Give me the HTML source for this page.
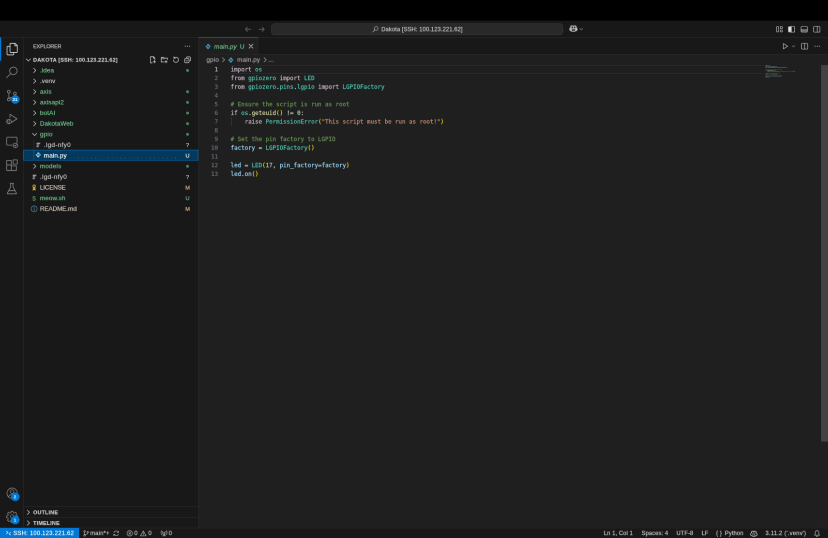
<!DOCTYPE html>
<html lang="en">
<head>
<meta charset="utf-8">
<title>main.py - Dakota [SSH: 100.123.221.62]</title>
<style>
html,body{margin:0;padding:0;background:#000;}
body{width:828px;height:538px;overflow:hidden;position:relative;}
#wrap{position:absolute;left:0;top:0;width:1711px;height:1112px;transform:scale(0.484);transform-origin:0 0;will-change:transform;}
#root{position:absolute;left:0;top:0;width:1711px;height:1112px;filter:url(#soft);
  font-family:"Liberation Sans",sans-serif;font-size:13px;color:#cccccc;background:#000;overflow:hidden;}
#root *{box-sizing:border-box;}
.abs{position:absolute;}
svg{display:block;overflow:visible;}
.ui{-webkit-text-stroke:0.250px;}
/* title bar */
#titlebar{left:0;top:42.5px;width:1711px;height:35px;background:#181818;border-bottom:1px solid #2b2b2b;}
#cc{left:560.300px;top:6px;width:603px;height:24px;background:#292929;border:1px solid #3c3c3c;border-radius:6px;}
#cctext{left:0;top:0;width:100%;height:22px;line-height:22px;text-align:center;font-size:12px;letter-spacing:0.190px;color:#cccccc;white-space:nowrap;}
/* activity bar */
#activity{left:0;top:77.5px;width:48px;height:1013.5px;background:#181818;border-right:1px solid #2b2b2b;}
.act{position:absolute;left:0;width:48px;height:48px;}
.act svg{position:absolute;left:9px;top:9px;width:30px;height:30px;}
.badge{position:absolute;left:21.500px;top:23px;min-width:18px;height:18px;border-radius:9px;background:#0078d4;color:#fff;font-size:9.500px;font-weight:bold;line-height:18px;text-align:center;padding:0 3px;}
/* sidebar */
#sidebar{left:48px;top:77.5px;width:362px;height:1013.5px;background:#181818;border-right:1px solid #2b2b2b;}
.row{position:absolute;left:0;width:361px;height:22px;line-height:22px;white-space:nowrap;}
.row .lbl{position:absolute;top:0.700px;letter-spacing:0.170px;}
.row .st{position:absolute;left:329px;top:0;width:20px;text-align:center;font-size:11.5px;}
.g{color:#73c991;}
.m{color:#d6cdbc;}
.st.m{color:#e2c08d;}
.dot{position:absolute;left:336px;top:8.500px;width:6px;height:6px;border-radius:3px;background:#73c991;opacity:.6;}
.chev{position:absolute;top:3px;width:16px;height:16px;}
.fic{position:absolute;top:3px;width:16px;height:16px;}
.hdr{font-size:11px;font-weight:bold;color:#cccccc;}
.hdr .lbl{letter-spacing:0.460px;top:0.500px;}
/* editor */
#editor{left:410px;top:77.5px;width:1301px;height:1013.5px;background:#1f1f1f;}
#tabs{left:0;top:0;width:1301px;height:35px;background:#181818;border-bottom:1px solid #2b2b2b;}
#tab{left:0;top:0.700px;width:123px;height:34.300px;background:#1f1f1f;border-top:1px solid #0078d4;border-right:1px solid #2b2b2b;}
#crumbs{left:0;top:35px;width:1301px;height:22px;line-height:22px;color:#a9a9a9;white-space:nowrap;}
#code{left:0;top:57px;width:1301px;height:956.5px;font-family:"DejaVu Sans Mono","Liberation Mono",monospace;font-size:12px;}
.ln{position:absolute;left:0;width:1301px;height:18px;line-height:18px;white-space:pre;}
.ln .n{position:absolute;left:0;top:0px;width:40px;text-align:right;color:#6e7681;-webkit-text-stroke:0.2px;}
.ln .c{position:absolute;left:66px;top:0px;color:#d4d4d4;-webkit-text-stroke:0.300px;}
.k{color:#ccb8ca;} .t{color:#4ec9b0;} .cm{color:#6a9955;} .s{color:#ce9178;} .v{color:#9cdcfe;} .b{color:#ffd700;} .nu{color:#b5cea8;} .f{color:#dcdcaa;}
/* status bar */
#status{left:0;top:1091px;width:1711px;height:21px;background:#181818;border-top:1px solid #2b2b2b;font-size:12px;line-height:21px;white-space:nowrap;}
#remote{left:0;top:-1px;width:163px;height:21px;background:#0078d4;color:#fff;}
.si{position:absolute;top:0;height:21px;line-height:21px;letter-spacing:0.200px;}
</style>
</head>
<body>
<svg width="0" height="0" style="position:absolute"><defs><filter id="soft" x="0" y="0" width="100%" height="100%" color-interpolation-filters="sRGB"><feConvolveMatrix order="2" targetX="1" targetY="0" kernelMatrix="1 1 1 1" divisor="4" edgeMode="duplicate" preserveAlpha="true"/></filter></defs></svg>
<div id="wrap"><div id="root">
<div id="titlebar" class="abs"><svg class="abs" style="left:504px;top:10px;width:16px;height:16px" viewBox="0 0 16 16" fill="none" stroke="#6c6c6c" stroke-width="1.3" stroke-linecap="round" stroke-linejoin="round" ><path d="M7 3.5L2.5 8L7 12.5M2.5 8H13.5"/></svg><svg class="abs" style="left:532px;top:10px;width:16px;height:16px" viewBox="0 0 16 16" fill="none" stroke="#6c6c6c" stroke-width="1.3" stroke-linecap="round" stroke-linejoin="round" ><path d="M9 3.5L13.500 8L9 12.500M13.500 8H2.500"/></svg><div id="cc" class="abs"><div id="cctext" class="abs ui"><svg style="display:inline-block;vertical-align:-3px;width:14px;height:14px;margin-right:5px" viewBox="0 0 16 16" fill="none" stroke="#cccccc" stroke-width="1.3" stroke-linecap="round"><circle cx="10" cy="6" r="4.3"/><path d="M7 9.200L1.800 14.400"/></svg>Dakota [SSH: 100.123.221.62]</div></div><svg class="abs" style="left:1174.5px;top:7.8px;width:18.5px;height:18.5px" viewBox="0 0 16 16" fill="none" stroke="none" stroke-width="1.2" stroke-linecap="round" stroke-linejoin="round" ><path d="M3 6.500V5a2 2 0 0 1 2-2h1a2 2 0 0 1 2 1.200a2 2 0 0 1 2-1.200h1a2 2 0 0 1 2 2v1.500c1.200.500 1.800 1.300 1.800 2.500v1.500c0 1-2.800 3-6.800 3s-6.800-2-6.800-3V9c0-1.200.600-2 1.800-2.500z" fill="#b4b4b4" stroke="#c8c8c8" stroke-width="1"/><rect x="4.700" y="4.300" width="2.300" height="3.600" rx="1" fill="#1c1c1c" stroke="none"/><rect x="9" y="4.300" width="2.300" height="3.600" rx="1" fill="#1c1c1c" stroke="none"/><rect x="5" y="9.600" width="6" height="2.700" rx="1.200" fill="#2a2a2a" stroke="none"/></svg><svg class="abs" style="left:1195px;top:12px;width:11px;height:11px" viewBox="0 0 16 16" fill="none" stroke="#9a9a9a" stroke-width="1.5" stroke-linecap="round" stroke-linejoin="round" ><path d="M3.5 6L8 10.5L12.5 6"/></svg><svg class="abs" style="left:1602px;top:10px;width:16px;height:16px" viewBox="0 0 16 16" fill="none" stroke="#cccccc" stroke-width="1.2" stroke-linecap="round" stroke-linejoin="round" ><rect x="2" y="2.500" width="4.500" height="11" rx="1"/><rect x="9.500" y="2.500" width="4.500" height="4" rx="1"/><rect x="9.500" y="9.500" width="4.500" height="4" rx="1"/></svg><svg class="abs" style="left:1627px;top:10px;width:16px;height:16px" viewBox="0 0 16 16" fill="none" stroke="#cccccc" stroke-width="1.2" stroke-linecap="round" stroke-linejoin="round" ><rect x="1.500" y="2" width="13" height="12" rx="2"/><path d="M2 3h5.500v10H2z" fill="#e0e0e0" stroke="none"/><path d="M7.500 2v12"/></svg><svg class="abs" style="left:1653px;top:10px;width:16px;height:16px" viewBox="0 0 16 16" fill="none" stroke="#cccccc" stroke-width="1.2" stroke-linecap="round" stroke-linejoin="round" ><rect x="1.500" y="2" width="13" height="12" rx="2"/><path d="M2 9h12v4.500H2z" fill="#6a6a6a" stroke="none"/><path d="M1.500 9h13"/></svg><svg class="abs" style="left:1679px;top:10px;width:16px;height:16px" viewBox="0 0 16 16" fill="none" stroke="#cccccc" stroke-width="1.2" stroke-linecap="round" stroke-linejoin="round" ><rect x="1.500" y="2" width="13" height="12" rx="2"/><path d="M9 2v12"/></svg></div>
<div id="activity" class="abs"><div class="abs" style="left:0;top:0;width:2px;height:48px;background:#0078d4"></div><div class="act" style="top:0px"><svg viewBox="0 0 24 24" fill="none" stroke="#d7d7d7" stroke-width="1.250" stroke-linecap="round" stroke-linejoin="round"><path d="M17.500 2.500h-7.500a1 1 0 0 0-1 1v13a1 1 0 0 0 1 1h10a1 1 0 0 0 1-1V6z"/><path d="M17 2.500V6.500h4"/><path d="M9 7.500H5a1 1 0 0 0-1 1v12a1 1 0 0 0 1 1h9a1 1 0 0 0 1-1v-3"/></svg></div><div class="act" style="top:48px"><svg viewBox="0 0 24 24" fill="none" stroke="#868686" stroke-width="1.250" stroke-linecap="round" stroke-linejoin="round"><circle cx="14.500" cy="9.500" r="6.200"/><path d="M10 14L3 21"/></svg></div><div class="act" style="top:96px"><svg viewBox="0 0 24 24" fill="none" stroke="#868686" stroke-width="1.250" stroke-linecap="round" stroke-linejoin="round"><circle cx="7" cy="5.500" r="2.300"/><circle cx="7" cy="18.500" r="2.300"/><circle cx="17" cy="8.500" r="2.300"/><path d="M7 7.800v8.400M17 10.800c0 3-2.500 4-6 4.500c-2.500.4-4 .8-4 1.500"/></svg><div class="badge">31</div></div><div class="act" style="top:144px"><svg viewBox="0 0 24 24" fill="none" stroke="#868686" stroke-width="1.250" stroke-linecap="round" stroke-linejoin="round"><path d="M9 4.500L20.500 12L11 18.200"/><path d="M9 4.500V10"/><circle cx="7.500" cy="16.500" r="3.600"/><path d="M7.500 13v7M4 16.500H2.500M3.800 13.500l1.200 1M3.800 19.800l1.200-1"/></svg></div><div class="act" style="top:192px"><svg viewBox="0 0 24 24" fill="none" stroke="#868686" stroke-width="1.250" stroke-linecap="round" stroke-linejoin="round"><path d="M20.500 13V5a1 1 0 0 0-1-1h-15a1 1 0 0 0-1 1v11a1 1 0 0 0 1 1h8"/><circle cx="17.800" cy="17.500" r="3.700"/><path d="M16.300 17.500l1.200 1.200l2-2.400"/></svg></div><div class="act" style="top:240px"><svg viewBox="0 0 24 24" fill="none" stroke="#868686" stroke-width="1.250" stroke-linecap="round" stroke-linejoin="round"><path d="M3.500 11.500h7.500v9h-7.500zM11 11.500v9h8.500v-7.500h-8.500M3.500 11.500v-7.500h7.500v7.500"/><rect x="14" y="3" width="7" height="7" rx=".5" transform="rotate(0 17.500 6.500)"/></svg></div><div class="act" style="top:288px"><svg viewBox="0 0 24 24" fill="none" stroke="#868686" stroke-width="1.250" stroke-linecap="round" stroke-linejoin="round"><path d="M9 3.500h6M10 3.500v6L4.500 19.500a.8.800 0 0 0 .7 1.200h13.600a.8.800 0 0 0 .7-1.200L14 9.500v-6"/><path d="M7 15.500h10"/></svg></div><div class="act" style="top:917.5px"><svg style="left:10.500px;top:10.500px;width:27px;height:27px" viewBox="0 0 24 24" fill="none" stroke="#868686" stroke-width="1.250" stroke-linecap="round" stroke-linejoin="round"><circle cx="12" cy="12" r="9.500"/><circle cx="12" cy="9" r="3.300"/><path d="M5.500 18.800c1-3 3.500-4.300 6.500-4.300s5.500 1.300 6.500 4.300"/></svg><div class="badge">2</div></div><div class="act" style="top:965.5px"><svg style="left:10.500px;top:10.500px;width:27px;height:27px" viewBox="0 0 24 24" fill="none" stroke="#868686" stroke-width="1.250" stroke-linecap="round" stroke-linejoin="round"><circle cx="12" cy="12" r="3.200"/><path d="M10.300 2.500h3.400l.5 2.600 1.700.7 2.200-1.500 2.400 2.400-1.500 2.200.7 1.700 2.600.5v3.400l-2.600.5-.7 1.700 1.500 2.200-2.400 2.400-2.200-1.500-1.700.7-.5 2.600h-3.400l-.5-2.600-1.700-.7-2.200 1.500-2.400-2.400 1.500-2.200-.7-1.700-2.600-.5v-3.400l2.600-.5.700-1.700-1.500-2.200 2.400-2.400 2.200 1.500 1.700-.7z"/></svg><div class="badge">1</div></div></div>
<div id="sidebar" class="abs"><div class="abs ui" style="left:20px;top:0;height:35px;line-height:36px;font-size:11px;color:#cccccc;letter-spacing:-0.250px;">EXPLORER</div><svg class="abs" style="left:331px;top:10px;width:16px;height:16px" viewBox="0 0 16 16" fill="#cccccc" stroke="none" stroke-width="1.2" stroke-linecap="round" stroke-linejoin="round" ><circle cx="3.500" cy="8" r="1.100"/><circle cx="8" cy="8" r="1.100"/><circle cx="12.500" cy="8" r="1.100"/></svg><div class="row hdr" style="top:35px"><svg class="abs" style="left:2px;top:3px;width:16px;height:16px" viewBox="0 0 16 16" fill="none" stroke="#cccccc" stroke-width="1.3" stroke-linecap="round" stroke-linejoin="round" ><path d="M3.5 6L8 10.5L12.5 6"/></svg><span class="lbl ui" style="left:20px">DAKOTA [SSH: 100.123.221.62]</span><svg class="abs" style="left:259px;top:3px;width:16px;height:16px" viewBox="0 0 16 16" fill="none" stroke="#cccccc" stroke-width="1.35" stroke-linecap="round" stroke-linejoin="round" ><path d="M9.500 1.500h-6v13h3.500M9.500 1.500l3 3v3.500M9.500 1.500v3h3"/><path d="M11.500 9.500v5M9 12h5" stroke-width="1.600"/></svg><svg class="abs" style="left:283px;top:3px;width:16px;height:16px" viewBox="0 0 16 16" fill="none" stroke="#cccccc" stroke-width="1.35" stroke-linecap="round" stroke-linejoin="round" ><path d="M14.500 7.500V4.500h-6.500l-1.500-1.500h-5v9.500h5.500"/><path d="M1.500 5.800h6.500"/><path d="M11.500 9.500v5M9 12h5" stroke-width="1.600"/></svg><svg class="abs" style="left:307px;top:3px;width:16px;height:16px" viewBox="0 0 16 16" fill="none" stroke="#cccccc" stroke-width="1.4" stroke-linecap="round" stroke-linejoin="round" ><path d="M4 4.500A5.300 5.300 0 1 1 2.700 8"/><path d="M3.800 1.800v3h3"/></svg><svg class="abs" style="left:331px;top:3px;width:16px;height:16px" viewBox="0 0 16 16" fill="none" stroke="#cccccc" stroke-width="1.35" stroke-linecap="round" stroke-linejoin="round" ><rect x="2" y="5.500" width="9" height="8.500" rx="2"/><path d="M5.500 3.500c.300-1 1-1.500 2-1.500h4.500a2 2 0 0 1 2 2v4.500c0 1-.500 1.700-1.500 2"/><path d="M4.500 9.800h4"/></svg></div><div class="row" style="top:57px;"><svg class="abs" style="left:15px;top:3px;width:16px;height:16px" viewBox="0 0 16 16" fill="none" stroke="#cccccc" stroke-width="1.3" stroke-linecap="round" stroke-linejoin="round" ><path d="M6 3.5L10.5 8L6 12.5"/></svg><span class="lbl ui g" style="left:34px">.idea</span><div class="dot"></div></div><div class="row" style="top:79px;"><svg class="abs" style="left:15px;top:3px;width:16px;height:16px" viewBox="0 0 16 16" fill="none" stroke="#cccccc" stroke-width="1.3" stroke-linecap="round" stroke-linejoin="round" ><path d="M6 3.5L10.5 8L6 12.5"/></svg><span class="lbl ui " style="left:34px">.venv</span></div><div class="row" style="top:101px;"><svg class="abs" style="left:15px;top:3px;width:16px;height:16px" viewBox="0 0 16 16" fill="none" stroke="#cccccc" stroke-width="1.3" stroke-linecap="round" stroke-linejoin="round" ><path d="M6 3.5L10.5 8L6 12.5"/></svg><span class="lbl ui g" style="left:34px;letter-spacing:0.300px">axis</span><div class="dot"></div></div><div class="row" style="top:123px;"><svg class="abs" style="left:15px;top:3px;width:16px;height:16px" viewBox="0 0 16 16" fill="none" stroke="#cccccc" stroke-width="1.3" stroke-linecap="round" stroke-linejoin="round" ><path d="M6 3.5L10.5 8L6 12.5"/></svg><span class="lbl ui g" style="left:34px;letter-spacing:0.250px">axisapi2</span><div class="dot"></div></div><div class="row" style="top:145px;"><svg class="abs" style="left:15px;top:3px;width:16px;height:16px" viewBox="0 0 16 16" fill="none" stroke="#cccccc" stroke-width="1.3" stroke-linecap="round" stroke-linejoin="round" ><path d="M6 3.5L10.5 8L6 12.5"/></svg><span class="lbl ui g" style="left:34px;letter-spacing:0.300px">botAI</span><div class="dot"></div></div><div class="row" style="top:167px;"><svg class="abs" style="left:15px;top:3px;width:16px;height:16px" viewBox="0 0 16 16" fill="none" stroke="#cccccc" stroke-width="1.3" stroke-linecap="round" stroke-linejoin="round" ><path d="M6 3.5L10.5 8L6 12.5"/></svg><span class="lbl ui g" style="left:34px">DakotaWeb</span><div class="dot"></div></div><div class="row" style="top:189px;"><svg class="abs" style="left:15px;top:3px;width:16px;height:16px" viewBox="0 0 16 16" fill="none" stroke="#cccccc" stroke-width="1.3" stroke-linecap="round" stroke-linejoin="round" ><path d="M3.5 6L8 10.5L12.5 6"/></svg><span class="lbl ui g" style="left:34px;letter-spacing:0.450px">gpio</span><div class="dot"></div></div><div class="row" style="top:211px;"><div class="abs" style="left:21px;top:0;width:1px;height:22px;background:#3c3c3c"></div><svg class="abs" style="left:22px;top:3px;width:16px;height:16px" viewBox="0 0 16 16" fill="none" stroke="none" stroke-width="1.2" stroke-linecap="round" stroke-linejoin="round" ><path d="M5 4.500h7.500M5 8h5.500M5 11.500h4" stroke="#c8c8c8" stroke-width="1.900" stroke-linecap="butt"/></svg><span class="lbl ui " style="left:42px;letter-spacing:0.700px">.lgd-nfy0</span><span class="st ui ">?</span></div><div class="row" style="top:233px;background:#04395e;outline:1px solid #0078d4;outline-offset:-1px;margin-top:-1px;line-height:24px;"><div class="abs" style="left:96px;top:16.500px;width:226px;height:1.500px;background:repeating-linear-gradient(90deg,rgba(140,190,230,0.300) 0,rgba(140,190,230,0.300) 1.500px,transparent 1.500px,transparent 8.700px)"></div><div class="abs" style="left:21px;top:0;width:1px;height:22px;background:#5a5a5a"></div><svg class="abs" style="left:23.5px;top:4.5px;width:13px;height:13px" viewBox="0 0 16 16" fill="none" stroke="none" stroke-width="1.2" stroke-linecap="round" stroke-linejoin="round" ><path d="M8 1.8c-2.2 0-2.9.7-2.9 1.9v1.5h3v.6H3.6C2.4 5.8 1.8 6.8 1.8 8.2s.6 2.4 1.8 2.4h1.2V9c0-1.2.9-2 2.1-2h2.6c1 0 1.7-.7 1.7-1.7V3.700c0-1.200-1-1.900-3.200-1.900z" fill="#8fcbe0" stroke="none"/><path d="M8 14.2c2.2 0 2.9-.7 2.900-1.900v-1.500h-3v-.600h4.500c1.200 0 1.800-1 1.800-2.400s-.6-2.400-1.800-2.400h-1.200V7c0 1.200-.9 2-2.100 2H6.500c-1 0-1.700.7-1.700 1.700v1.600c0 1.200 1 1.900 3.200 1.900z" fill="#8fcbe0" stroke="none"/></svg><span class="lbl ui " style="left:42px;color:#ffffff;letter-spacing:0.300px">main.py</span><span class="st ui g" style="color:#ffffff">U</span></div><div class="row" style="top:255px;"><svg class="abs" style="left:15px;top:3px;width:16px;height:16px" viewBox="0 0 16 16" fill="none" stroke="#cccccc" stroke-width="1.3" stroke-linecap="round" stroke-linejoin="round" ><path d="M6 3.5L10.5 8L6 12.5"/></svg><span class="lbl ui g" style="left:34px;letter-spacing:0.400px">models</span><div class="dot"></div></div><div class="row" style="top:277px;"><svg class="abs" style="left:14px;top:3px;width:16px;height:16px" viewBox="0 0 16 16" fill="none" stroke="none" stroke-width="1.2" stroke-linecap="round" stroke-linejoin="round" ><path d="M5 4.500h7.500M5 8h5.500M5 11.500h4" stroke="#c8c8c8" stroke-width="1.900" stroke-linecap="butt"/></svg><span class="lbl ui " style="left:34px;letter-spacing:0.700px">.lgd-nfy0</span><span class="st ui ">?</span></div><div class="row" style="top:299px;"><svg class="abs" style="left:14px;top:3px;width:16px;height:16px" viewBox="0 0 16 16" fill="none" stroke="none" stroke-width="1.2" stroke-linecap="round" stroke-linejoin="round" ><circle cx="8" cy="5.200" r="2.600" fill="none" stroke="#d3aa2c" stroke-width="1.800"/><path d="M6.300 8L5.300 14l2.700-1.800 2.700 1.800-1-6" fill="#d3aa2c" stroke="#d3aa2c" stroke-width="1"/></svg><span class="lbl ui m" style="left:34px;letter-spacing:-0.360px">LICENSE</span><span class="st ui m">M</span></div><div class="row" style="top:321px;"><svg class="abs" style="left:14px;top:3px;width:16px;height:16px" viewBox="0 0 16 16" fill="none" stroke="none" stroke-width="1.2" stroke-linecap="round" stroke-linejoin="round" ><text x="8" y="13" text-anchor="middle" font-family="Liberation Sans,sans-serif" font-size="13" fill="#6db46c" stroke="none">$</text></svg><span class="lbl ui g" style="left:34px;letter-spacing:0.250px">meow.sh</span><span class="st ui g">U</span></div><div class="row" style="top:343px;"><svg class="abs" style="left:14px;top:3px;width:16px;height:16px" viewBox="0 0 16 16" fill="none" stroke="none" stroke-width="1.2" stroke-linecap="round" stroke-linejoin="round" ><circle cx="8" cy="8" r="6.200" fill="none" stroke="#4ba0b4" stroke-width="1.200"/><path d="M8 7v4.500M8 4.300v1.200" stroke="#4ba0b4" stroke-width="1.500" stroke-linecap="butt"/></svg><span class="lbl ui m" style="left:34px;letter-spacing:-0.170px">README.md</span><span class="st ui m">M</span></div><div class="row hdr" style="top:969.5px;border-top:1px solid #2b2b2b;line-height:21px"><svg class="abs" style="left:2px;top:3px;width:16px;height:16px" viewBox="0 0 16 16" fill="none" stroke="#cccccc" stroke-width="1.3" stroke-linecap="round" stroke-linejoin="round" ><path d="M6 3.5L10.5 8L6 12.5"/></svg><span class="lbl ui" style="left:20px">OUTLINE</span></div><div class="row hdr" style="top:991.5px;border-top:1px solid #2b2b2b;line-height:21px"><svg class="abs" style="left:2px;top:3px;width:16px;height:16px" viewBox="0 0 16 16" fill="none" stroke="#cccccc" stroke-width="1.3" stroke-linecap="round" stroke-linejoin="round" ><path d="M6 3.5L10.5 8L6 12.5"/></svg><span class="lbl ui" style="left:20px">TIMELINE</span></div></div>
<div id="editor" class="abs"><div id="tabs" class="abs"><div id="tab" class="abs"><svg class="abs" style="left:13.0px;top:11.0px;width:13px;height:13px" viewBox="0 0 16 16" fill="none" stroke="none" stroke-width="1.2" stroke-linecap="round" stroke-linejoin="round" ><path d="M8 1.8c-2.2 0-2.9.7-2.9 1.9v1.5h3v.6H3.6C2.4 5.8 1.8 6.8 1.8 8.2s.6 2.4 1.8 2.4h1.2V9c0-1.2.9-2 2.1-2h2.6c1 0 1.7-.7 1.7-1.7V3.700c0-1.200-1-1.900-3.200-1.900z" fill="#519aba" stroke="none"/><path d="M8 14.2c2.2 0 2.9-.7 2.900-1.900v-1.500h-3v-.600h4.500c1.200 0 1.800-1 1.800-2.400s-.6-2.400-1.800-2.400h-1.200V7c0 1.200-.9 2-2.100 2H6.500c-1 0-1.700.7-1.700 1.700v1.600c0 1.200 1 1.900 3.200 1.900z" fill="#519aba" stroke="none"/></svg><span class="abs ui g" style="left:32px;top:0.500px;height:34px;line-height:34px;font-style:italic;letter-spacing:0.150px;">main.py</span><span class="abs ui g" style="left:85px;top:0.500px;height:34px;line-height:34px;">U</span><svg class="abs" style="left:100px;top:9px;width:16px;height:16px" viewBox="0 0 16 16" fill="none" stroke="#e0e0e0" stroke-width="1.3" stroke-linecap="round" stroke-linejoin="round" ><path d="M4 4l8 8M12 4l-8 8"/></svg></div><svg class="abs" style="left:1204px;top:10px;width:16px;height:16px" viewBox="0 0 16 16" fill="none" stroke="#cccccc" stroke-width="1.2" stroke-linecap="round" stroke-linejoin="round" ><path d="M4 2.500v11l9-5.500z"/></svg><svg class="abs" style="left:1224px;top:13px;width:10px;height:10px" viewBox="0 0 16 16" fill="none" stroke="#cccccc" stroke-width="1.6" stroke-linecap="round" stroke-linejoin="round" ><path d="M3.5 6L8 10.5L12.5 6"/></svg><svg class="abs" style="left:1243.5px;top:10px;width:16px;height:16px" viewBox="0 0 16 16" fill="none" stroke="#cccccc" stroke-width="1.2" stroke-linecap="round" stroke-linejoin="round" ><rect x="1.500" y="2" width="13" height="12" rx="1.500"/><path d="M8 2v12"/></svg><svg class="abs" style="left:1269.5px;top:10px;width:16px;height:16px" viewBox="0 0 16 16" fill="#cccccc" stroke="none" stroke-width="1.2" stroke-linecap="round" stroke-linejoin="round" ><circle cx="3.500" cy="8" r="1.100"/><circle cx="8" cy="8" r="1.100"/><circle cx="12.500" cy="8" r="1.100"/></svg></div><div id="crumbs" class="abs"><span class="abs ui" style="left:16px;top:0.800px;letter-spacing:0.350px">gpio</span><svg class="abs" style="left:43px;top:3.8px;width:16px;height:16px" viewBox="0 0 16 16" fill="none" stroke="#a9a9a9" stroke-width="1.2" stroke-linecap="round" stroke-linejoin="round" ><path d="M6 3.5L10.5 8L6 12.5"/></svg><svg class="abs" style="left:60.2px;top:5.3px;width:13px;height:13px" viewBox="0 0 16 16" fill="none" stroke="none" stroke-width="1.2" stroke-linecap="round" stroke-linejoin="round" ><path d="M8 1.8c-2.2 0-2.9.7-2.9 1.9v1.5h3v.6H3.6C2.4 5.8 1.8 6.8 1.8 8.2s.6 2.4 1.8 2.4h1.2V9c0-1.2.9-2 2.1-2h2.6c1 0 1.7-.7 1.7-1.7V3.700c0-1.200-1-1.900-3.200-1.900z" fill="#519aba" stroke="none"/><path d="M8 14.2c2.2 0 2.9-.7 2.900-1.900v-1.500h-3v-.600h4.500c1.200 0 1.800-1 1.800-2.400s-.6-2.400-1.800-2.400h-1.200V7c0 1.200-.9 2-2.100 2H6.500c-1 0-1.700.7-1.700 1.700v1.600c0 1.200 1 1.900 3.200 1.900z" fill="#519aba" stroke="none"/></svg><span class="abs ui" style="left:79.500px;top:0.800px;letter-spacing:0.300px">main.py</span><svg class="abs" style="left:129px;top:3.8px;width:16px;height:16px" viewBox="0 0 16 16" fill="none" stroke="#a9a9a9" stroke-width="1.2" stroke-linecap="round" stroke-linejoin="round" ><path d="M6 3.5L10.5 8L6 12.5"/></svg><span class="abs ui" style="left:143px;top:0.800px">…</span></div><div id="code" class="abs"><div class="abs" style="left:67px;top:0;width:1100px;height:18px;border-top:1px solid #303030;border-bottom:1px solid #303030;"></div><div class="abs" style="left:67px;top:108px;width:1px;height:18px;background:#404040;"></div><div class="ln" style="top:0px"><span class="n" style="color:#cccccc">1</span><span class="c"><span class="k">import</span> <span class="t">os</span></span></div><div class="ln" style="top:18px"><span class="n">2</span><span class="c"><span class="k">from</span> <span class="t">gpiozero</span> <span class="k">import</span> <span class="t">LED</span></span></div><div class="ln" style="top:36px"><span class="n">3</span><span class="c"><span class="k">from</span> <span class="t">gpiozero</span>.<span class="t">pins</span>.<span class="t">lgpio</span> <span class="k">import</span> <span class="t">LGPIOFactory</span></span></div><div class="ln" style="top:54px"><span class="n">4</span><span class="c"></span></div><div class="ln" style="top:72px"><span class="n">5</span><span class="c"><span class="cm"># Ensure the script is run as root</span></span></div><div class="ln" style="top:90px"><span class="n">6</span><span class="c"><span class="k">if</span> <span class="t">os</span>.<span class="f">geteuid</span><span class="b">()</span> != <span class="nu">0</span>:</span></div><div class="ln" style="top:108px"><span class="n">7</span><span class="c">    <span class="k">raise</span> <span class="t">PermissionError</span><span class="b">(</span><span class="s">"This script must be run as root!"</span><span class="b">)</span></span></div><div class="ln" style="top:126px"><span class="n">8</span><span class="c"></span></div><div class="ln" style="top:144px"><span class="n">9</span><span class="c"><span class="cm"># Set the pin factory to LGPIO</span></span></div><div class="ln" style="top:162px"><span class="n">10</span><span class="c"><span class="v">factory</span> = <span class="t">LGPIOFactory</span><span class="b">()</span></span></div><div class="ln" style="top:180px"><span class="n">11</span><span class="c"></span></div><div class="ln" style="top:198px"><span class="n">12</span><span class="c"><span class="v">led</span> = <span class="t">LED</span><span class="b">(</span><span class="nu">17</span>, <span class="v">pin_factory</span>=<span class="v">factory</span><span class="b">)</span></span></div><div class="ln" style="top:216px"><span class="n">13</span><span class="c"><span class="v">led</span>.<span class="v">on</span><span class="b">()</span></span></div><div class="abs" style="left:1171.0px;top:0.5px;width:6.0px;height:1.200px;background:#8d7a8c"></div><div class="abs" style="left:1178.0px;top:0.5px;width:2.0px;height:1.200px;background:#3c8d7f"></div><div class="abs" style="left:1171.0px;top:2.5px;width:4.0px;height:1.200px;background:#8d7a8c"></div><div class="abs" style="left:1176.0px;top:2.5px;width:8.0px;height:1.200px;background:#3c8d7f"></div><div class="abs" style="left:1185.0px;top:2.5px;width:6.0px;height:1.200px;background:#8d7a8c"></div><div class="abs" style="left:1192.0px;top:2.5px;width:3.0px;height:1.200px;background:#3c8d7f"></div><div class="abs" style="left:1171.0px;top:4.5px;width:4.0px;height:1.200px;background:#8d7a8c"></div><div class="abs" style="left:1176.0px;top:4.5px;width:8.0px;height:1.200px;background:#3c8d7f"></div><div class="abs" style="left:1184.0px;top:4.5px;width:1.0px;height:1.200px;background:#8a8a8a"></div><div class="abs" style="left:1185.0px;top:4.5px;width:4.0px;height:1.200px;background:#3c8d7f"></div><div class="abs" style="left:1189.0px;top:4.5px;width:1.0px;height:1.200px;background:#8a8a8a"></div><div class="abs" style="left:1190.0px;top:4.5px;width:5.0px;height:1.200px;background:#3c8d7f"></div><div class="abs" style="left:1196.0px;top:4.5px;width:6.0px;height:1.200px;background:#8d7a8c"></div><div class="abs" style="left:1203.0px;top:4.5px;width:12.0px;height:1.200px;background:#3c8d7f"></div><div class="abs" style="left:1171.0px;top:8.5px;width:1.0px;height:1.200px;background:#435c39"></div><div class="abs" style="left:1173.0px;top:8.5px;width:6.0px;height:1.200px;background:#435c39"></div><div class="abs" style="left:1180.0px;top:8.5px;width:3.0px;height:1.200px;background:#435c39"></div><div class="abs" style="left:1184.0px;top:8.5px;width:6.0px;height:1.200px;background:#435c39"></div><div class="abs" style="left:1191.0px;top:8.5px;width:2.0px;height:1.200px;background:#435c39"></div><div class="abs" style="left:1194.0px;top:8.5px;width:3.0px;height:1.200px;background:#435c39"></div><div class="abs" style="left:1198.0px;top:8.5px;width:2.0px;height:1.200px;background:#435c39"></div><div class="abs" style="left:1201.0px;top:8.5px;width:4.0px;height:1.200px;background:#435c39"></div><div class="abs" style="left:1171.0px;top:10.5px;width:2.0px;height:1.200px;background:#8d7a8c"></div><div class="abs" style="left:1174.0px;top:10.5px;width:2.0px;height:1.200px;background:#3c8d7f"></div><div class="abs" style="left:1176.0px;top:10.5px;width:1.0px;height:1.200px;background:#8a8a8a"></div><div class="abs" style="left:1177.0px;top:10.5px;width:7.0px;height:1.200px;background:#9a9a7c"></div><div class="abs" style="left:1184.0px;top:10.5px;width:2.0px;height:1.200px;background:#a89a30"></div><div class="abs" style="left:1187.0px;top:10.5px;width:2.0px;height:1.200px;background:#8a8a8a"></div><div class="abs" style="left:1190.0px;top:10.5px;width:1.0px;height:1.200px;background:#80907a"></div><div class="abs" style="left:1191.0px;top:10.5px;width:1.0px;height:1.200px;background:#8a8a8a"></div><div class="abs" style="left:1175.0px;top:12.5px;width:5.0px;height:1.200px;background:#8d7a8c"></div><div class="abs" style="left:1181.0px;top:12.5px;width:15.0px;height:1.200px;background:#3c8d7f"></div><div class="abs" style="left:1196.0px;top:12.5px;width:1.0px;height:1.200px;background:#a89a30"></div><div class="abs" style="left:1197.0px;top:12.5px;width:5.0px;height:1.200px;background:#7a5c4e"></div><div class="abs" style="left:1203.0px;top:12.5px;width:6.0px;height:1.200px;background:#7a5c4e"></div><div class="abs" style="left:1210.0px;top:12.5px;width:4.0px;height:1.200px;background:#7a5c4e"></div><div class="abs" style="left:1215.0px;top:12.5px;width:2.0px;height:1.200px;background:#7a5c4e"></div><div class="abs" style="left:1218.0px;top:12.5px;width:3.0px;height:1.200px;background:#7a5c4e"></div><div class="abs" style="left:1222.0px;top:12.5px;width:2.0px;height:1.200px;background:#7a5c4e"></div><div class="abs" style="left:1225.0px;top:12.5px;width:6.0px;height:1.200px;background:#7a5c4e"></div><div class="abs" style="left:1231.0px;top:12.5px;width:1.0px;height:1.200px;background:#a89a30"></div><div class="abs" style="left:1171.0px;top:16.5px;width:1.0px;height:1.200px;background:#435c39"></div><div class="abs" style="left:1173.0px;top:16.5px;width:3.0px;height:1.200px;background:#435c39"></div><div class="abs" style="left:1177.0px;top:16.5px;width:3.0px;height:1.200px;background:#435c39"></div><div class="abs" style="left:1181.0px;top:16.5px;width:3.0px;height:1.200px;background:#435c39"></div><div class="abs" style="left:1185.0px;top:16.5px;width:7.0px;height:1.200px;background:#435c39"></div><div class="abs" style="left:1193.0px;top:16.5px;width:2.0px;height:1.200px;background:#435c39"></div><div class="abs" style="left:1196.0px;top:16.5px;width:5.0px;height:1.200px;background:#435c39"></div><div class="abs" style="left:1171.0px;top:18.5px;width:7.0px;height:1.200px;background:#7097ad"></div><div class="abs" style="left:1179.0px;top:18.5px;width:1.0px;height:1.200px;background:#8a8a8a"></div><div class="abs" style="left:1181.0px;top:18.5px;width:12.0px;height:1.200px;background:#3c8d7f"></div><div class="abs" style="left:1193.0px;top:18.5px;width:2.0px;height:1.200px;background:#a89a30"></div><div class="abs" style="left:1171.0px;top:22.5px;width:3.0px;height:1.200px;background:#7097ad"></div><div class="abs" style="left:1175.0px;top:22.5px;width:1.0px;height:1.200px;background:#8a8a8a"></div><div class="abs" style="left:1177.0px;top:22.5px;width:3.0px;height:1.200px;background:#3c8d7f"></div><div class="abs" style="left:1180.0px;top:22.5px;width:1.0px;height:1.200px;background:#a89a30"></div><div class="abs" style="left:1181.0px;top:22.5px;width:2.0px;height:1.200px;background:#80907a"></div><div class="abs" style="left:1183.0px;top:22.5px;width:1.0px;height:1.200px;background:#8a8a8a"></div><div class="abs" style="left:1185.0px;top:22.5px;width:11.0px;height:1.200px;background:#7097ad"></div><div class="abs" style="left:1196.0px;top:22.5px;width:1.0px;height:1.200px;background:#8a8a8a"></div><div class="abs" style="left:1197.0px;top:22.5px;width:7.0px;height:1.200px;background:#7097ad"></div><div class="abs" style="left:1204.0px;top:22.5px;width:1.0px;height:1.200px;background:#a89a30"></div><div class="abs" style="left:1171.0px;top:24.5px;width:3.0px;height:1.200px;background:#7097ad"></div><div class="abs" style="left:1174.0px;top:24.5px;width:1.0px;height:1.200px;background:#8a8a8a"></div><div class="abs" style="left:1175.0px;top:24.5px;width:2.0px;height:1.200px;background:#7097ad"></div><div class="abs" style="left:1177.0px;top:24.5px;width:2.0px;height:1.200px;background:#a89a30"></div><div class="abs" style="left:1287px;top:0;width:14px;height:956.5px;border-left:1px solid #262626;"></div><div class="abs" style="left:1286px;top:0;width:15px;height:778px;background:#424242;"></div></div></div>
<div id="status" class="abs"><div id="remote" class="abs"><svg class="abs" style="left:10px;top:4px;width:14px;height:14px" viewBox="0 0 16 16" fill="none" stroke="#ffffff" stroke-width="1.3" stroke-linecap="round" stroke-linejoin="round" ><path d="M3 3.500l4 3-4 3M13 6.500l-4 3 4 3"/></svg><span class="abs ui" style="left:27px;top:1px;line-height:21px;letter-spacing:0.570px;">SSH: 100.123.221.62</span></div><svg class="abs" style="left:170px;top:3px;width:15px;height:15px" viewBox="0 0 16 16" fill="none" stroke="#cccccc" stroke-width="1.1" stroke-linecap="round" stroke-linejoin="round" ><circle cx="4.500" cy="3.500" r="1.700"/><circle cx="4.500" cy="12.500" r="1.700"/><circle cx="11.500" cy="5.500" r="1.700"/><path d="M4.500 5.200v5.600M11.500 7.200c0 2.500-3 2.800-7 3.600"/></svg><span class="si ui" style="left:186px;letter-spacing:0.350px">main*+</span><svg class="abs" style="left:232px;top:3px;width:15px;height:15px" viewBox="0 0 16 16" fill="none" stroke="#cccccc" stroke-width="1.1" stroke-linecap="round" stroke-linejoin="round" ><path d="M3 6.500a5.200 5.200 0 0 1 9.600-1M13 9.500a5.200 5.200 0 0 1-9.600 1"/><path d="M13.200 3v2.800h-2.800M2.800 13v-2.800h2.800"/></svg><svg class="abs" style="left:260px;top:3px;width:15px;height:15px" viewBox="0 0 16 16" fill="none" stroke="#cccccc" stroke-width="1.1" stroke-linecap="round" stroke-linejoin="round" ><circle cx="8" cy="8" r="6"/><path d="M5.800 5.800l4.400 4.400M10.200 5.800l-4.400 4.400"/></svg><span class="si ui" style="left:277px">0</span><svg class="abs" style="left:288px;top:3px;width:15px;height:15px" viewBox="0 0 16 16" fill="none" stroke="#cccccc" stroke-width="1.1" stroke-linecap="round" stroke-linejoin="round" ><path d="M8 2.500L14.300 13.500H1.700z"/><path d="M8 6.500v3.500M8 11.500v.3"/></svg><span class="si ui" style="left:306px">0</span><svg class="abs" style="left:331px;top:3px;width:15px;height:15px" viewBox="0 0 16 16" fill="none" stroke="#cccccc" stroke-width="1.1" stroke-linecap="round" stroke-linejoin="round" ><path d="M8 7.500v6.500M5 14l3-5 3 5"/><circle cx="8" cy="6.500" r="1.200"/><path d="M4.800 9.500a4.300 4.300 0 0 1 0-6M11.200 9.500a4.300 4.300 0 0 0 0-6M2.800 11a7 7 0 0 1 0-9M13.200 11a7 7 0 0 0 0-9"/></svg><span class="si ui" style="left:348px">0</span><span class="si ui" style="left:1247px">Ln 1, Col 1</span><span class="si ui" style="left:1325px">Spaces: 4</span><span class="si ui" style="left:1397px">UTF-8</span><span class="si ui" style="left:1449px">LF</span><span class="si ui" style="left:1479px">{ }</span><span class="si ui" style="left:1497px">Python</span><svg class="abs" style="left:1549px;top:2.5px;width:16px;height:16px" viewBox="0 0 16 16" fill="none" stroke="#cccccc" stroke-width="1.3" stroke-linecap="round" stroke-linejoin="round" ><path d="M3 6.500V5a2 2 0 0 1 2-2h1a2 2 0 0 1 2 2a2 2 0 0 1 2-2h1a2 2 0 0 1 2 2v1.500"/><path d="M3 6.500c-1.200.500-1.800 1.300-1.800 2.500v1.500c0 1 2.800 3 6.800 3s6.800-2 6.800-3V9c0-1.200-.600-2-1.800-2.500"/><path d="M3 6.800c1.500.700 3 .700 5-.300c2 1 3.500 1 5 .300" stroke-width="1"/><path d="M6.200 9.500v1.600M9.800 9.500v1.600" stroke-width="1.400"/></svg><span class="si ui" style="left:1581px;letter-spacing:0.450px">3.11.2 ('.venv')</span><svg class="abs" style="left:1680px;top:3px;width:15px;height:15px" viewBox="0 0 16 16" fill="none" stroke="#cccccc" stroke-width="1.2" stroke-linecap="round" stroke-linejoin="round" ><path d="M8 2a4 4 0 0 0-4 4v3.500l-1.500 2.500h11L12 9.500V6a4 4 0 0 0-4-4z"/><path d="M6.500 13.700a1.500 1.500 0 0 0 3 0"/></svg></div>
</div></div>
</body>
</html>
